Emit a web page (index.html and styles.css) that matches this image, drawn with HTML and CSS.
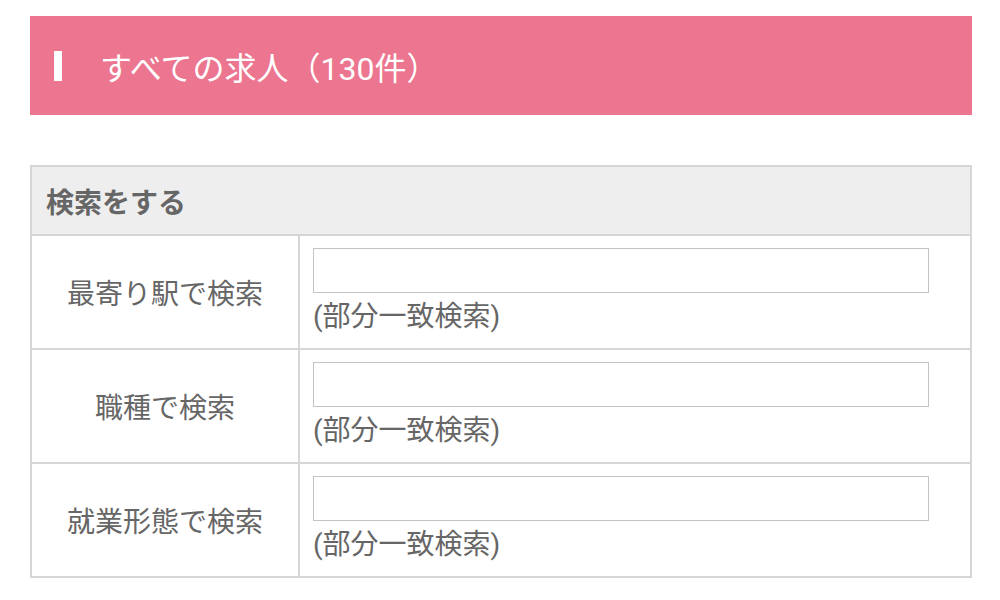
FILE: index.html
```html
<!DOCTYPE html>
<html lang="ja">
<head>
    <meta charset="UTF-8">
    <meta name="viewport" content="width=device-width, initial-scale=1.0">
    <title>すべての求人</title>
    <link rel="stylesheet" href="styles.css">
</head>
<body>

    <!-- Page title -->
    <h1 class="page-title"><span class="title-bar"></span>すべての求人（130件）</h1>

    <!-- Search form -->
    <table class="search-table">
        <tr>
            <th colspan="2" class="search-head">検索をする</th>
        </tr>
        <tr>
            <td class="label">最寄り駅で検索</td>
            <td class="field">
                <input type="text" class="text-input">
                <div class="note">(部分一致検索)</div>
            </td>
        </tr>
        <tr>
            <td class="label">職種で検索</td>
            <td class="field">
                <input type="text" class="text-input">
                <div class="note">(部分一致検索)</div>
            </td>
        </tr>
        <tr>
            <td class="label">就業形態で検索</td>
            <td class="field">
                <input type="text" class="text-input">
                <div class="note">(部分一致検索)</div>
            </td>
        </tr>
    </table>

</body>
</html>
```

FILE: styles.css
```css
body {
    background-color: #fff;
    font-family: Roboto, "Noto Sans CJK JP", sans-serif;
    color: #666;
    margin: 0;
    padding: 16px 28px 0 30px;
}
.page-title {
    display: flex;
    align-items: center;
    height: 99px;
    margin: 0;
    padding-left: 24px;
    background-color: #ec7590;
    color: #fff;
    font-size: 32px;
    font-weight: normal;
}
.title-bar {
    display: inline-block;
    width: 8px;
    height: 30px;
    background-color: #fff;
    margin-right: 38px;
}
.search-table {
    width: 100%;
    margin-top: 50px;
    border-collapse: collapse;
    border: 2px solid #d2d2d2;
}
.search-table td,
.search-table th {
    border: 2px solid #d6d6d6;
}
.search-head {
    height: 67px;
    padding: 0 14px;
    background-color: #eee;
    text-align: left;
    font-size: 28px;
    font-weight: bold;
}
.label {
    width: 266px;
    text-align: center;
    font-size: 28px;
    padding: 0;
}
.field {
    padding: 12px 41px 8px 13px;
    height: 92px;
}
.text-input {
    display: block;
    box-sizing: border-box;
    width: 100%;
    height: 45px;
    margin: 0;
    border: 1px solid #c4c4c4;
    border-radius: 0;
    font-size: 20px;
}
.note {
    font-size: 28px;
    line-height: 47px;
}
```
